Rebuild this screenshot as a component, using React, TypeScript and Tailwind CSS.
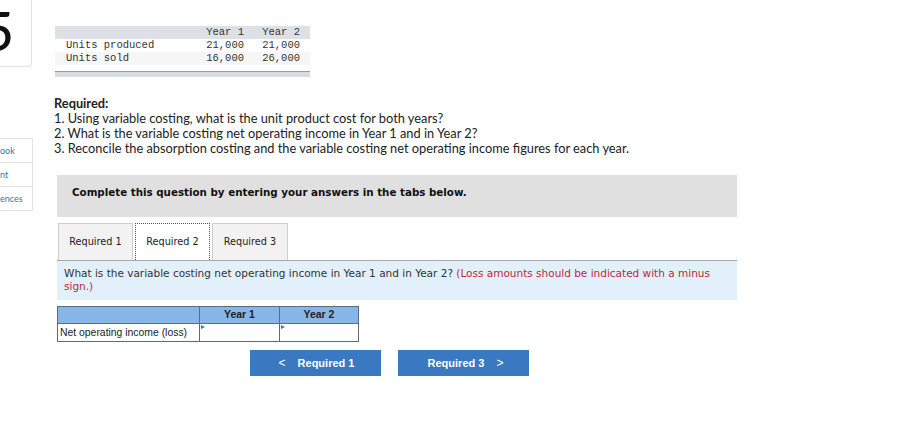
import React from "react";

const mono = { fontFamily: '"Liberation Mono", "Courier New", monospace' };

function InputCell() {
  return (
    <div className="relative h-full bg-white">
      <span className="absolute left-[1px] top-[1px] w-0 h-0 border-t-[2.5px] border-b-[2.5px] border-l-[4px] border-t-transparent border-b-transparent border-l-[#3b7bc6]" />
    </div>
  );
}

export default function App() {
  return (
    <div className="w-[911px] h-[445px] bg-white overflow-hidden flex text-[#222]">
      {/* left column */}
      <div className="w-[54px] shrink-0 flex flex-col">
        <div className="w-[32px] h-[67px] border-r border-b border-[#e2e2e2] rounded-br-[4px] overflow-hidden flex items-start justify-end">
          <span
            className="text-[54px] leading-none font-medium text-[#111] mr-[17px] mt-[4px]"
            style={{ fontFamily: 'Lato, "Open Sans", sans-serif' }}
          >
            5
          </span>
        </div>
        <div
          className="mt-[71px] w-[33px] border-t border-b border-r border-[#e3e3e3] flex flex-col text-[9px] text-[#3f6fa5]"
          style={{ fontFamily: 'Lato, "Open Sans", sans-serif' }}
        >
          <div className="h-[24px] flex items-center border-b border-[#e3e3e3]">ook</div>
          <div className="h-[24px] flex items-center border-b border-[#e3e3e3]">nt</div>
          <div className="h-[23px] flex items-center">ences</div>
        </div>
      </div>

      {/* main column */}
      <div className="flex flex-col">
        {/* data table */}
        <div className="mt-[26px] ml-[1px] w-[255px] text-[10.5px] text-[#333]" style={mono}>
          <div className="grid grid-cols-[141px_57px_57px] h-[13px] bg-[#dde1e7] items-center leading-none">
            <div />
            <div className="text-right pr-[9px]">Year 1</div>
            <div className="text-right pr-[10px]">Year 2</div>
          </div>
          <div className="grid grid-cols-[141px_57px_57px] h-[13px] bg-white items-center leading-none">
            <div className="pl-[11px]">Units produced</div>
            <div className="text-right pr-[9px]">21,000</div>
            <div className="text-right pr-[10px]">21,000</div>
          </div>
          <div className="grid grid-cols-[141px_57px_57px] h-[13px] bg-[#f6f6f6] items-center leading-none">
            <div className="pl-[11px]">Units sold</div>
            <div className="text-right pr-[9px]">16,000</div>
            <div className="text-right pr-[10px]">26,000</div>
          </div>
          <div className="mt-[6px] h-[6px] border-t border-[#9a9a9a] bg-[#d8dce2]" />
        </div>

        {/* required */}
        <div
          className="mt-[19px] text-[12.8px] leading-[15px] text-[#222]"
          style={{ fontFamily: 'Lato, "Open Sans", sans-serif' }}
        >
          <div className="font-bold">Required:</div>
          <div>1. Using variable costing, what is the unit product cost for both years?</div>
          <div>2. What is the variable costing net operating income in Year 1 and in Year 2?</div>
          <div>3. Reconcile the absorption costing and the variable costing net operating income figures for each year.</div>
        </div>

        {/* gray box */}
        <div
          className="mt-[19px] ml-[3px] w-[680px] h-[42px] bg-[#e0e0e0] pl-[15px] pt-[10px] text-[10.3px] font-bold text-[#111]"
          style={{ fontFamily: '"DejaVu Sans", Verdana, sans-serif' }}
        >
          Complete this question by entering your answers in the tabs below.
        </div>

        {/* tabs */}
        <div
          className="mt-[6px] ml-[3px] w-[680px] flex items-end gap-[2px] pl-[1px] border-b border-[#a9a9a9] text-[9.7px] text-[#222]"
          style={{ fontFamily: '"DejaVu Sans", Verdana, sans-serif' }}
        >
          <div className="w-[75px] h-[37px] bg-[#f2f2f2] border border-b-0 border-[#cfcfcf] flex items-center justify-center">
            Required 1
          </div>
          <div className="w-[75px] h-[37px] bg-white border border-b-0 border-dotted border-[#555] flex items-center justify-center">
            Required 2
          </div>
          <div className="w-[76px] h-[37px] bg-[#f2f2f2] border border-b-0 border-[#cfcfcf] flex items-center justify-center">
            Required 3
          </div>
        </div>

        {/* blue info */}
        <div
          className="ml-[3px] w-[680px] h-[39px] bg-[#e2f0fb] pl-[7px] pr-[20px] pt-[6px] text-[10.5px] leading-[13px] text-[#333]"
          style={{ fontFamily: '"DejaVu Sans", Verdana, sans-serif' }}
        >
          <p>
            What is the variable costing net operating income in Year 1 and in Year 2?{" "}
            <span className="text-[#c0283a]">(Loss amounts should be indicated with a minus sign.)</span>
          </p>
        </div>

        {/* answer table */}
        <div
          className="mt-[6px] ml-[3px] w-[302px] border border-[#5e6b7b] text-[10.4px]"
          style={{ fontFamily: '"Liberation Sans", Arial, sans-serif' }}
        >
          <div className="grid grid-cols-[142px_80px_78px] h-[17px] bg-[#86b6ea] border-b border-[#5e6b7b]">
            <div className="border-r border-[#5e6b7b]" />
            <div className="border-r border-[#5e6b7b] flex items-center justify-center font-bold text-[10.5px]">Year 1</div>
            <div className="flex items-center justify-center font-bold text-[10.5px]">Year 2</div>
          </div>
          <div className="grid grid-cols-[142px_80px_78px] h-[17px]">
            <div className="border-r border-[#5e6b7b] flex items-center pl-[2px] text-[#222]">Net operating income (loss)</div>
            <div className="border-r border-[#5e6b7b]"><InputCell /></div>
            <div><InputCell /></div>
          </div>
        </div>

        {/* buttons */}
        <div
          className="mt-[8px] ml-[196px] flex gap-[17px] text-white font-bold text-[11px]"
          style={{ fontFamily: '"Liberation Sans", Arial, sans-serif' }}
        >
          <div className="w-[131px] h-[26px] bg-[#3a78c1] flex items-center justify-center gap-[12px] pl-[2px]">
            <span className="font-normal text-[12px]">&lt;</span>
            <span>Required 1</span>
          </div>
          <div className="w-[131px] h-[26px] bg-[#3a78c1] flex items-center justify-center gap-[12px] pl-[4px]">
            <span>Required 3</span>
            <span className="font-normal text-[12px]">&gt;</span>
          </div>
        </div>
      </div>
    </div>
  );
}
